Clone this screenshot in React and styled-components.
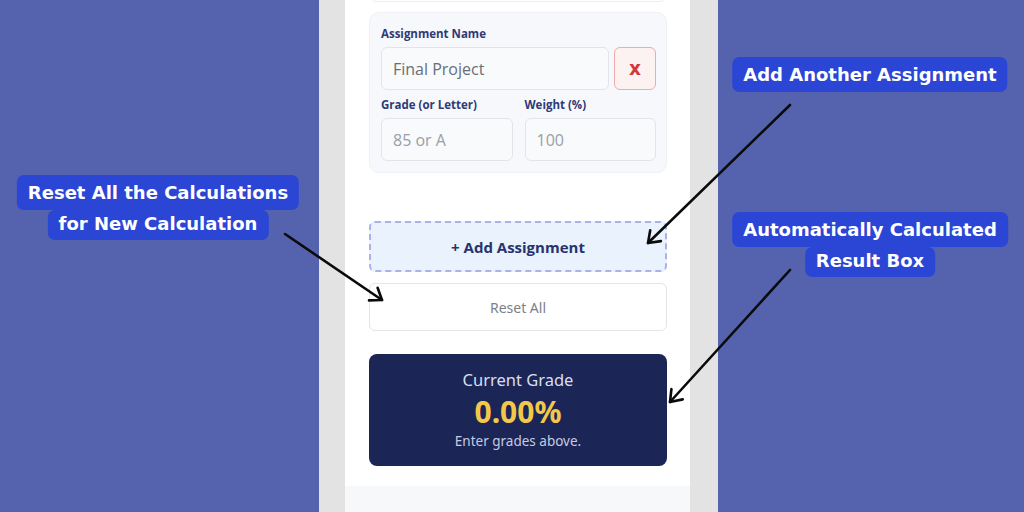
import React from "react";
import styled, { createGlobalStyle } from "styled-components";

const GlobalStyle = createGlobalStyle`
  html, body {
    margin: 0;
    padding: 0;
    width: 1024px;
    height: 512px;
    overflow: hidden;
  }
  * {
    box-sizing: border-box;
  }
`;

const UI_FONT = `"Open Sans", "Noto Sans", sans-serif`;
const ALT_FONT = `"Noto Sans", "Open Sans", sans-serif`;
const CALLOUT_FONT = `"DejaVu Sans", "Open Sans", sans-serif`;

const Page = styled.div`
  position: relative;
  width: 1024px;
  height: 512px;
  background: #5563ae;
  display: grid;
  grid-template-columns: 319px 399px 1fr;
  font-family: ${UI_FONT};
`;

const Phone = styled.div`
  grid-column: 2;
  height: 512px;
  background: #e3e3e3;
  padding: 0 28px 0 26px;
  display: flex;
`;

const Screen = styled.div`
  flex: 1;
  background: #fff;
  display: flex;
  flex-direction: column;
`;

const Content = styled.div`
  padding: 0 23px 0 24px;
  display: flex;
  flex-direction: column;
`;

const PrevCard = styled.div`
  height: 2px;
  margin: 0 4px;
  border: 1px solid #eceef2;
  border-top: none;
  border-radius: 0 0 8px 8px;
`;

const AssignmentCard = styled.div`
  margin-top: 10px;
  background: #f6f8fb;
  border: 1px solid #eef1f5;
  border-radius: 10px;
  padding: 14px 10px 11px 11px;
  display: flex;
  flex-direction: column;
`;

const Label = styled.div`
  font-size: 11.5px;
  font-weight: 700;
  color: #2f3a78;
  line-height: 14px;
  margin-bottom: 6px;
`;

const Row = styled.div`
  display: flex;
  gap: ${({ $gap }) => $gap}px;
`;

const Field = styled.div`
  flex: 1;
  display: flex;
  flex-direction: column;
`;

const Input = styled.div`
  height: 43px;
  border: 1px solid #e1e5ea;
  border-radius: 6px;
  background: #f8fafc;
  display: flex;
  align-items: center;
  padding: 0 11px;
  font-size: 16px;
  color: ${({ $placeholder }) => ($placeholder ? "#9a9ea6" : "#6a6e75")};
`;

const RemoveButton = styled.div`
  width: 42px;
  height: 43px;
  border: 1px solid #f1a9a9;
  border-radius: 6px;
  background: #fdf2f2;
  color: #d13a3a;
  font-weight: 800;
  font-size: 16px;
  display: flex;
  align-items: center;
  justify-content: center;
`;

const FieldGrid = styled.div`
  margin-top: 8px;
  display: grid;
  grid-template-columns: 1fr 1fr;
  gap: 12px;
`;

const AddButton = styled.div`
  margin-top: 48px;
  height: 51px;
  background: #e9f2fd;
  border: 2px dashed #a9b3e6;
  border-radius: 6px;
  display: flex;
  align-items: center;
  justify-content: center;
  font-size: 15px;
  font-weight: 700;
  color: #27336f;
`;

const ResetButton = styled.div`
  margin-top: 11px;
  height: 48px;
  background: #fff;
  border: 1px solid #e2e5ea;
  border-radius: 6px;
  display: flex;
  align-items: center;
  justify-content: center;
  font-family: ${ALT_FONT};
  font-size: 14px;
  color: #7c8088;
`;

const ResultBox = styled.div`
  margin-top: 23px;
  height: 112px;
  background: #1c2656;
  border-radius: 8px;
  display: flex;
  flex-direction: column;
  align-items: center;
  justify-content: center;
  font-family: ${ALT_FONT};
`;

const ResultTitle = styled.div`
  font-size: 16.5px;
  color: #d9def0;
  line-height: 22px;
`;

const ResultValue = styled.div`
  font-size: 30px;
  font-weight: 700;
  color: #f3c84a;
  line-height: 41px;
`;

const ResultHint = styled.div`
  font-size: 13.5px;
  color: #c5cbe0;
  line-height: 19px;
`;

const Footer = styled.div`
  margin-top: auto;
  height: 26px;
  background: #f7f8fa;
`;

const Callout = styled.div`
  position: absolute;
  left: ${({ $x }) => $x}px;
  top: ${({ $y }) => $y}px;
  transform: translateX(-50%);
  display: flex;
  flex-direction: column;
  align-items: center;
  font-family: ${CALLOUT_FONT};
  font-weight: 700;
  font-size: 18px;
  color: #fff;
  white-space: nowrap;
`;

const CalloutLine = styled.div`
  background: #2b45d5;
  border-radius: 7px;
  padding: ${({ $first }) => ($first ? "4px 11px 3px" : "0 11px 2px")};
  line-height: 28px;
`;

const Overlay = styled.svg`
  position: absolute;
  inset: 0;
  pointer-events: none;
`;

function Arrow({ from, to }) {
  const [x1, y1] = from;
  const [x2, y2] = to;
  const ang = Math.atan2(y2 - y1, x2 - x1);
  const len = 13;
  const spread = Math.PI / 5;
  const a = [x2 - len * Math.cos(ang - spread), y2 - len * Math.sin(ang - spread)];
  const b = [x2 - len * Math.cos(ang + spread), y2 - len * Math.sin(ang + spread)];
  return (
    <g stroke="#0b0b0b" strokeWidth="2.6" fill="none" strokeLinecap="round" strokeLinejoin="round">
      <line x1={x1} y1={y1} x2={x2} y2={y2} />
      <polyline points={`${a[0]},${a[1]} ${x2},${y2} ${b[0]},${b[1]}`} />
    </g>
  );
}

export default function App() {
  return (
    <>
      <GlobalStyle />
      <Page>
        <Phone>
          <Screen>
            <Content>
              <PrevCard />
              <AssignmentCard>
                <Label>Assignment Name</Label>
                <Row $gap={5}>
                  <Field>
                    <Input>Final Project</Input>
                  </Field>
                  <RemoveButton>X</RemoveButton>
                </Row>
                <FieldGrid>
                  <Field>
                    <Label>Grade (or Letter)</Label>
                    <Input $placeholder>85 or A</Input>
                  </Field>
                  <Field>
                    <Label>Weight (%)</Label>
                    <Input $placeholder>100</Input>
                  </Field>
                </FieldGrid>
              </AssignmentCard>
              <AddButton>+ Add Assignment</AddButton>
              <ResetButton>Reset All</ResetButton>
              <ResultBox>
                <ResultTitle>Current Grade</ResultTitle>
                <ResultValue>0.00%</ResultValue>
                <ResultHint>Enter grades above.</ResultHint>
              </ResultBox>
            </Content>
            <Footer />
          </Screen>
        </Phone>

        <Callout $x={158} $y={175}>
          <CalloutLine $first>Reset All the Calculations</CalloutLine>
          <CalloutLine>for New Calculation</CalloutLine>
        </Callout>
        <Callout $x={870} $y={57}>
          <CalloutLine $first>Add Another Assignment</CalloutLine>
        </Callout>
        <Callout $x={870} $y={212}>
          <CalloutLine $first>Automatically Calculated</CalloutLine>
          <CalloutLine>Result Box</CalloutLine>
        </Callout>

        <Overlay width="1024" height="512" viewBox="0 0 1024 512">
          <Arrow from={[285, 234]} to={[382, 300]} />
          <Arrow from={[790, 105]} to={[648, 243]} />
          <Arrow from={[790, 270]} to={[670, 402]} />
        </Overlay>
      </Page>
    </>
  );
}
